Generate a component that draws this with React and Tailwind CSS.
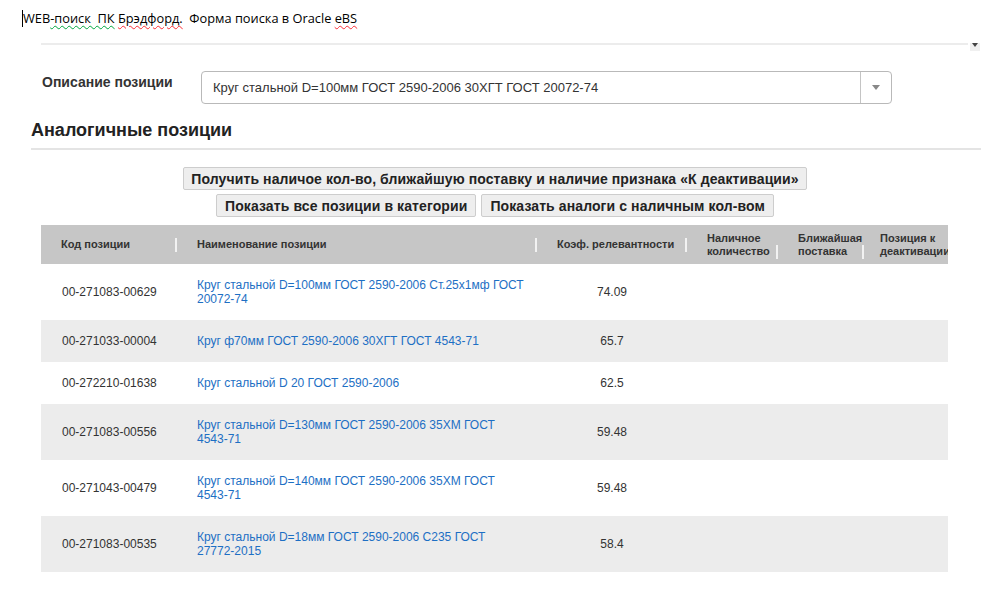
import React from 'react';

const rows = [
  { code: '00-271083-00629', name: 'Круг стальной D=100мм ГОСТ 2590-2006 Ст.25х1мф ГОСТ 20072-74', coef: '74.09' },
  { code: '00-271033-00004', name: 'Круг ф70мм ГОСТ 2590-2006 30ХГТ ГОСТ 4543-71', coef: '65.7' },
  { code: '00-272210-01638', name: 'Круг стальной D 20 ГОСТ 2590-2006', coef: '62.5' },
  { code: '00-271083-00556', name: 'Круг стальной D=130мм ГОСТ 2590-2006 35ХМ ГОСТ 4543-71', coef: '59.48' },
  { code: '00-271043-00479', name: 'Круг стальной D=140мм ГОСТ 2590-2006 35ХМ ГОСТ 4543-71', coef: '59.48' },
  { code: '00-271083-00535', name: 'Круг стальной D=18мм ГОСТ 2590-2006 С235 ГОСТ 27772-2015', coef: '58.4' },
];

const columns = [
  { title: ['Код позиции'], width: 'w-[136px]' },
  { title: ['Наименование позиции'], width: 'w-[360px]' },
  { title: ['Коэф. релевантности'], width: 'w-[150px]' },
  { title: ['Наличное', 'количество'], width: 'w-[91px]' },
  { title: ['Ближайшая', 'поставка'], width: 'w-[82px]' },
  { title: ['Позиция к', 'деактивации'], width: 'w-[100px]', last: true },
];

function HeaderCell({ col }) {
  return (
    <div className={`${col.width} shrink-0 flex items-center pl-5 h-full`}>
      <div className="flex-1 flex items-end justify-between">
        <div className="leading-[13px] whitespace-nowrap">
          {col.title.map((t) => (
            <div key={t}>{t}</div>
          ))}
        </div>
        {!col.last && <div className="w-[2px] h-[14px] bg-[#f2f2f2] mb-[-1px]" />}
      </div>
    </div>
  );
}

// keep "4543-71" style tokens from breaking at the hyphen
function NoBreakWords({ text }) {
  const words = text.split(' ');
  return words.map((w, i) => (
    <React.Fragment key={i}>
      <span className="whitespace-nowrap">{w}</span>
      {i < words.length - 1 ? ' ' : ''}
    </React.Fragment>
  ));
}

const btn =
  'h-[23px] bg-[#eeeeee] border border-[#cdcdcd] rounded-[2px] text-[14px] font-bold text-[#222] tracking-[0.1px] leading-[20px]';

export default function App() {
  return (
    <div className="w-[981px] h-[597px] bg-white overflow-hidden font-['Liberation_Sans',Arial,sans-serif] text-[#333]">
      {/* document heading */}
      <div className="pt-[9px] pl-[22px] h-[43px] flex items-start">
        <div className="w-px h-[17px] bg-black mt-[1px]" />
        <p className="font-['Open_Sans',sans-serif] text-[12.8px] text-black leading-[18px] whitespace-pre">
          W
          <span>EB</span>
          <span className="underline decoration-wavy decoration-green-600 decoration-1 underline-offset-2">-поиск  ПК</span>{' '}
          <span className="underline decoration-wavy decoration-red-500 decoration-1 underline-offset-2">Брэдфорд.</span>
          {'  Форма поиска в Oracle '}
          <span className="underline decoration-wavy decoration-red-500 decoration-1 underline-offset-2">eBS</span>
        </p>
      </div>

      <div className="flex items-start pl-[41px]">
        <div className="w-[927px] h-[2px] bg-[#ececec]" />
        <div className="ml-[2px] w-[10px] h-[8px] bg-[#f0f0f0] flex items-start justify-center">
          <div className="w-0 h-0 border-l-[3px] border-r-[3px] border-t-[4px] border-l-transparent border-r-transparent border-t-[#444]" />
        </div>
      </div>

      {/* description row */}
      <div className="flex items-start mt-[20px] pl-[42px]">
        <div className="w-[159px] pt-[1px] text-[14px] font-bold text-[#333]">Описание позиции</div>
        <div className="w-[691px] h-[33px] border border-[#b9b9b9] rounded-[4px] flex items-center">
          <div className="flex-1 pl-[11px] text-[13px] text-[#333]">Круг стальной D=100мм ГОСТ 2590-2006 30ХГТ ГОСТ 20072-74</div>
          <div className="w-[31px] h-full border-l border-[#c4c4c4] flex items-center justify-center">
            <div className="w-0 h-0 border-l-[4px] border-r-[4px] border-t-[5px] border-l-transparent border-r-transparent border-t-[#888]" />
          </div>
        </div>
      </div>

      <h2 className="pl-[31px] mt-[14px] text-[18px] font-bold text-[#222] leading-[24px]">Аналогичные позиции</h2>
      <div className="ml-[31px] mt-[6px] h-[2px] bg-[#e4e4e4]" />

      {/* action buttons */}
      <div className="flex flex-col items-center gap-[4px] mt-[17px] pl-[9px]">
        <button className={`${btn} px-[7px]`}>
          Получить наличое кол-во, ближайшую поставку и наличие признака «К деактивации»
        </button>
        <div className="flex gap-[5px]">
          <button className={`${btn} px-[8px]`}>Показать все позиции в категории</button>
          <button className={`${btn} px-[8px]`}>Показать аналоги с наличным кол-вом</button>
        </div>
      </div>

      {/* results table */}
      <div className="ml-[41px] mt-[8px] w-[907px] overflow-hidden">
        <div className="flex h-[39px] bg-[#c6c6c6] text-[11px] font-bold text-[#333]">
          {columns.map((col) => (
            <HeaderCell key={col.title[0]} col={col} />
          ))}
        </div>
        {rows.map((r, i) => (
          <div key={r.code} className={`flex text-[12px] leading-[14px] ${i % 2 === 1 ? 'bg-[#ececec]' : 'bg-white'}`}>
            <div className="w-[136px] shrink-0 pl-[21px] py-[14px] flex items-center">{r.code}</div>
            <div className="w-[360px] shrink-0 pl-5 pr-[2px] py-[14px] flex items-center">
              <a href="#" className="text-[#1d6fc4]">
                <NoBreakWords text={r.name} />
              </a>
            </div>
            <div className="w-[150px] shrink-0 py-[14px] flex items-center justify-center">{r.coef}</div>
            <div className="flex-1" />
          </div>
        ))}
      </div>
    </div>
  );
}
